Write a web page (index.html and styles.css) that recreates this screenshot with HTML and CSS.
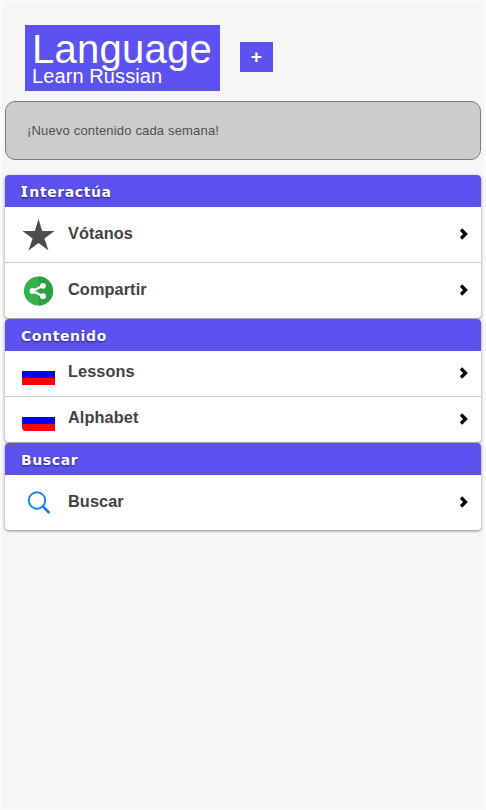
FILE: index.html
```html
<!DOCTYPE html>
<html lang="es">
<head>
<meta charset="utf-8">
<title>Language</title>
<link rel="stylesheet" href="styles.css">
</head>
<body>
<header class="top">
  <div class="logo"><div class="name">Language</div><div class="tagline">Learn Russian</div></div>
  <div class="plus">+</div>
</header>
<div class="notice">¡Nuevo contenido cada semana!</div>
<section class="group">
  <h2 class="serif-initial">Interactúa</h2>
  <div class="row">
    <svg class="icon" viewBox="0 0 34 34"><path fill="#4d4d50" d="M17.500 1l3.700 11.900H33.500l-10.100 7.500L27.500 32.500l-10-7.500L7.500 32.500l4.100-12.100L1.500 12.900h12.300z"/></svg>
    <span class="label">Vótanos</span>
    <svg class="arrow" viewBox="0 0 10 12"><path d="M2 1.500l4.500 4.500-4.500 4.500"/></svg>
  </div>
  <div class="row">
    <svg class="icon" viewBox="0 0 34 34"><circle cx="17.500" cy="17" r="14.600" fill="#35b34a"/><path d="M17.500 2.400a14.600 14.600 0 0 1 0 29.200z" fill="#2ba143"/><path d="M22 11.800L11.500 17l10.500 5.200" fill="none" stroke="#fff" stroke-width="2.300"/><g fill="#fff"><circle cx="22" cy="11.800" r="2.900"/><circle cx="11.500" cy="17" r="2.900"/><circle cx="22" cy="22.200" r="2.900"/></g></svg>
    <span class="label">Compartir</span>
    <svg class="arrow" viewBox="0 0 10 12"><path d="M2 1.500l4.500 4.500-4.500 4.500"/></svg>
  </div>
</section>
<section class="group">
  <h2>Contenido</h2>
  <div class="row short">
    <span class="icon flag"></span>
    <span class="label">Lessons</span>
    <svg class="arrow" viewBox="0 0 10 12"><path d="M2 1.500l4.500 4.500-4.500 4.500"/></svg>
  </div>
  <div class="row short">
    <span class="icon flag rounded"></span>
    <span class="label">Alphabet</span>
    <svg class="arrow" viewBox="0 0 10 12"><path d="M2 1.500l4.500 4.500-4.500 4.500"/></svg>
  </div>
</section>
<section class="group">
  <h2>Buscar</h2>
  <div class="row">
    <svg class="icon" viewBox="0 0 34 34"><g fill="none" stroke="#1682f5"><circle cx="16" cy="14.500" r="8.200" stroke-width="1.900"/><path d="M21.900 20.400l5.800 5.800" stroke-width="2.700" stroke-linecap="round"/></g></svg>
    <span class="label">Buscar</span>
    <svg class="arrow" viewBox="0 0 10 12"><path d="M2 1.500l4.500 4.500-4.500 4.500"/></svg>
  </div>
</section>
</body>
</html>
```
FILE: styles.css
```css
* { box-sizing: border-box; }
body {
  margin: 0;
  min-height: 810px;
  padding: 23px 3px 0;
  border: 2px solid #fafafa;
  background: #f6f6f6;
  font-family: "Liberation Sans", Arial, sans-serif;
}
.top {
  display: flex;
  align-items: flex-start;
  height: 76px;
  padding-left: 20px;
}
.logo {
  width: 195px;
  height: 66px;
  padding: 1px 0 0 7px;
  background: #5b52ef;
  color: #fff;
}
.name {
  font-size: 40px;
  line-height: 46px;
  letter-spacing: 0.250px;
}
.tagline {
  margin-top: -7px;
  font-size: 20px;
  line-height: 23px;
  letter-spacing: 0.1px;
}
.plus {
  width: 32.500px;
  height: 30px;
  margin: 17px 0 0 20px;
  background: #5b52ef;
  color: #fff;
  font-size: 19px;
  font-weight: bold;
  line-height: 29px;
  text-align: center;
}
.notice {
  height: 59px;
  margin-bottom: 15px;
  padding-left: 21px;
  border: 1px solid #7c7c7c;
  border-radius: 10px;
  background: #ccc;
  color: #505050;
  font-size: 13px;
  line-height: 57px;
  letter-spacing: 0.170px;
}
.group {
  margin-bottom: 1px;
  border-radius: 4px;
  background: #fff;
  box-shadow: 0 1px 3px rgba(0, 0, 0, 0.45);
}
h2 {
  height: 32px;
  margin: 0;
  padding-left: 16px;
  border-radius: 4px 4px 0 0;
  background: #5b52ef;
  color: #fff;
  font: bold 14px/35px "DejaVu Sans", sans-serif;
  letter-spacing: 0.6px;
  text-shadow: 0 1px 2px rgba(0, 0, 0, 0.6);
}
.serif-initial::first-letter {
  font-family: "Noto Sans", sans-serif;
  font-size: 15px;
  font-weight: 900;
  letter-spacing: 1.700px;
  line-height: 1;
}
.row {
  display: flex;
  align-items: center;
  height: 55px;
  padding: 0 12px 0 16px;
}
.row + .row {
  height: 56px;
  border-top: 1px solid #ccc;
}
.row.short { height: 45px; }
.row.short + .row.short { height: 46px; }
.icon {
  width: 34px;
  height: 34px;
  margin: 1px 13px 0 0;
}
.flag {
  width: 33px;
  height: 14px;
  margin: 8px 13px 0 1px;
  background: linear-gradient(#00f 50%, #f00 50%);
}
.flag.rounded { border-radius: 0 0 0 4px; }
.label {
  flex: 1;
  margin-top: -3px;
  color: #424242;
  font-size: 16.300px;
  font-weight: bold;
  letter-spacing: 0.100px;
}
.short .label { margin-top: -4px; }
.arrow {
  width: 10px;
  height: 12px;
  margin-top: -2px;
}
.arrow path {
  fill: none;
  stroke: #000;
  stroke-width: 3.300;
}
```
